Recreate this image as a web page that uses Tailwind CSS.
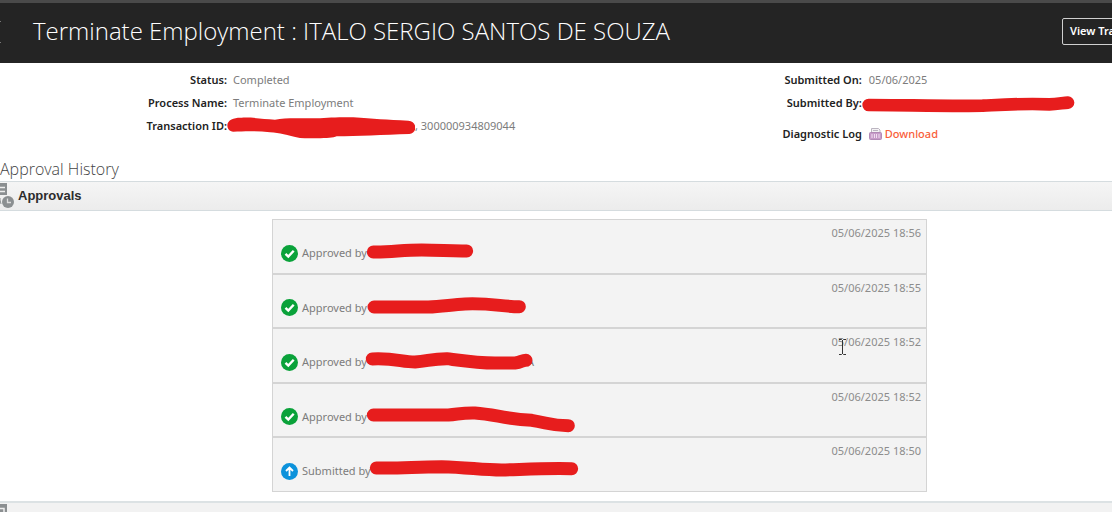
<!DOCTYPE html>
<html lang="en">

<head>
    <meta charset="utf-8" />
    <meta name="viewport" content="width=device-width, initial-scale=1.0" />
    <title>Terminate Employment</title>
    <script src="https://cdn.jsdelivr.net/npm/@tailwindcss/browser@4"></script>
</head>

<body class="bg-white font-['Noto_Sans','Open_Sans',sans-serif] text-[11px] leading-5 text-[#7c7c7c] overflow-hidden">
    <header class="relative flex items-center justify-between h-[63px] pl-[33px] pb-1 bg-[#242424] border-t-3 border-[#4a4a4a] overflow-hidden">
        <button class="absolute left-0 top-[17px]" aria-label="Back">
            <svg class="w-[2px] h-[24px]" viewBox="0 0 2 24" fill="none" stroke="#777"><path d="M-1 3 1 1M-1 21 1 23" /></svg>
        </button>
        <h1 class="font-['Open_Sans',sans-serif] font-light text-2xl text-white whitespace-nowrap">Terminate Employment : ITALO SERGIO SANTOS DE SOUZA</h1>
        <button class="shrink-0 w-[120px] h-[27px] pl-[7px] -mr-[70px] border border-[#d0d0d0] rounded-xs text-left font-semibold text-white whitespace-nowrap">View Transaction</button>
    </header>

    <main>
        <section class="grid grid-cols-[57%_43%] h-[91px] pt-[7px]">
            <dl class="flex flex-col gap-[3px]">
                <div class="flex gap-[6px]">
                    <dt class="w-[227px] text-right font-semibold text-[#222]">Status:</dt>
                    <dd>Completed</dd>
                </div>
                <div class="flex gap-[6px]">
                    <dt class="w-[227px] text-right font-semibold text-[#222]">Process Name:</dt>
                    <dd>Terminate Employment</dd>
                </div>
                <div class="flex">
                    <dt class="w-[227px] text-right font-semibold text-[#222]">Transaction ID:</dt>
                    <dd class="flex">
                        <svg class="w-[188px] h-[24px]" viewBox="261 156 564 72" fill="#e71d1d"><path d="M262 184C262 166 285 160 305 161C345 160 370 165 405 167C430 162 460 163 500 163C560 164 570 158 640 160C700 164 740 168 805 170C832 172 833 207 808 210C730 213 650 216 590 217C575 223 545 224 480 222C440 214 420 206 390 205C350 200 310 202 280 203C268 203 262 194 262 184Z" /></svg>
                        <span>, 300000934809044</span>
                    </dd>
                </div>
            </dl>
            <dl class="flex flex-col gap-[3px]">
                <div class="flex gap-[7px]">
                    <dt class="w-[228px] text-right font-semibold text-[#222]">Submitted On:</dt>
                    <dd>05/06/2025</dd>
                </div>
                <div class="flex">
                    <dt class="w-[228px] text-right font-semibold text-[#222]">Submitted By:</dt>
                    <dd>
                        <svg class="w-[213px] h-[20px]" viewBox="278 84 639 60" fill="none" stroke="#e71d1d" stroke-width="38" stroke-linecap="round" stroke-linejoin="round"><path d="M298 120C400 120 540 124 640 122C720 118 760 115 840 118C865 117 880 114 896 113" /></svg>
                    </dd>
                </div>
                <div class="flex gap-[7px] pt-2">
                    <dt class="w-[228px] text-right font-semibold text-[#222]">Diagnostic Log</dt>
                    <dd>
                        <a href="#" class="flex items-center gap-[3px] font-medium text-[#f9603a]">
                            <svg class="w-[13px] h-[12px]" viewBox="0 0 13 12">
                                <path d="M2.500 5V.5h7l1.500 1.500v3" fill="#f4f2f5" stroke="#bbb5c0" />
                                <path d="M4 2.500h5" stroke="#bbb5c0" />
                                <rect x=".5" y="4.500" width="12" height="7" rx="1" fill="#c79cc9" stroke="#b18ab6" />
                                <path d="M3 6v4M5.500 6v4M7.500 6v4M10 6v4" stroke="#f0dff1" />
                            </svg>
                            Download
                        </a>
                    </dd>
                </div>
            </dl>
        </section>

        <h2 class="h-[27px] pt-[5px] font-['Open_Sans',sans-serif] font-light text-base leading-5 text-[#444]">Approval History</h2>

        <section>
            <div class="flex items-center h-[30px] border-y border-[#d5dcdf] bg-linear-to-b from-[#f5f5f5] to-[#ececec]">
                <svg class="w-[14px] h-[26px] mr-1" viewBox="0 0 14 26">
                    <path d="M0 0h7v12H0z" fill="#8b8f91" />
                    <path d="M0 4.500h5M0 8.500h5" stroke="#eee" stroke-width="1.500" />
                    <path d="M0 15v2l1 4" fill="none" stroke="#8b8f91" />
                    <circle cx="8" cy="19" r="6" fill="#8b8f91" />
                    <path d="M7.500 15.500V19.500h3.500" fill="none" stroke="#ddd" stroke-width="1.300" />
                </svg>
                <h3 class="font-['Liberation_Sans',sans-serif] font-bold text-[13px] text-[#2c2c2c]">Approvals</h3>
            </div>

            <div class="pt-2 pb-[9px] pl-[272px] pr-[185px]">
                <ol class="flex flex-col h-[273px] bg-[#f3f3f3] border border-[#d4d4d4]">
                    <li class="flex-1 pt-[3px] px-[5px] border-b-2 border-[#d4d4d4]">
                        <time class="block text-right text-[#8c8c8c]">05/06/2025 18:56</time>
                        <div class="flex items-center pl-[3px]">
                            <svg class="w-[17px] h-[17px] mr-1" viewBox="0 0 17 17"><circle cx="8.500" cy="8.500" r="8.500" fill="#0aa23a" /><path d="M4.500 8.800 7.300 11.600 12.700 5.700" fill="none" stroke="#fff" stroke-width="2.400" /></svg>
                            <span>Approved by</span>
                            <svg class="w-[110px] h-[20px] -ml-[2px] overflow-visible" viewBox="300 84 330 60" fill="none" stroke="#e71d1d" stroke-width="39" stroke-linecap="round"><path d="M325 111C380 112 410 105 470 105S550 109 605 108" /></svg>
                        </div>
                    </li>
                    <li class="flex-1 pt-[3px] px-[5px] border-b-2 border-[#d4d4d4]">
                        <time class="block text-right text-[#8c8c8c]">05/06/2025 18:55</time>
                        <div class="flex items-center pl-[3px]">
                            <svg class="w-[17px] h-[17px] mr-1" viewBox="0 0 17 17"><circle cx="8.500" cy="8.500" r="8.500" fill="#0aa23a" /><path d="M4.500 8.800 7.300 11.600 12.700 5.700" fill="none" stroke="#fff" stroke-width="2.400" /></svg>
                            <span>Approved by</span>
                            <svg class="w-[163px] h-[20px] -ml-[2px] overflow-visible" viewBox="300 249 489 60" fill="none" stroke="#e71d1d" stroke-width="39" stroke-linecap="round"><path d="M327 276H490C530 275 560 269 600 267C680 264 710 275 763 275" /></svg>
                        </div>
                    </li>
                    <li class="flex-1 pt-[3px] px-[5px] border-b-2 border-[#d4d4d4]">
                        <time class="relative block text-right text-[#8c8c8c]">05/06/2025 18:52
                            <svg class="absolute right-[74px] top-[6px] w-[9px] h-[18px]" viewBox="0 0 9 18" fill="none" stroke="#333"><path d="M1 1.500h2.500l1 1 1-1H8M4.500 2v14M1 16.500h2.500l1-1 1 1H8" /></svg>
                        </time>
                        <div class="flex items-center pl-[3px]">
                            <svg class="w-[17px] h-[17px] mr-1" viewBox="0 0 17 17"><circle cx="8.500" cy="8.500" r="8.500" fill="#0aa23a" /><path d="M4.500 8.800 7.300 11.600 12.700 5.700" fill="none" stroke="#fff" stroke-width="2.400" /></svg>
                            <span>Approved by</span>
                            <svg class="relative z-10 w-[170px] h-[20px] -ml-[2px] overflow-visible" viewBox="300 81 510 60" fill="none" stroke="#e71d1d" stroke-width="39" stroke-linecap="round"><path d="M322 102C390 99 410 111 450 111C490 108 500 101 545 101C600 108 640 114 690 114H750C770 112 770 106 783 106" /></svg>
                            <span class="-ml-2">A</span>
                        </div>
                    </li>
                    <li class="flex-1 pt-[3px] px-[5px] border-b-2 border-[#d4d4d4]">
                        <time class="block text-right text-[#8c8c8c]">05/06/2025 18:52</time>
                        <div class="flex items-center pl-[3px]">
                            <svg class="w-[17px] h-[17px] mr-1" viewBox="0 0 17 17"><circle cx="8.500" cy="8.500" r="8.500" fill="#0aa23a" /><path d="M4.500 8.800 7.300 11.600 12.700 5.700" fill="none" stroke="#fff" stroke-width="2.400" /></svg>
                            <span>Approved by</span>
                            <svg class="w-[213px] h-[20px] -ml-[2px] overflow-visible" viewBox="300 246 639 60" fill="none" stroke="#e71d1d" stroke-width="39" stroke-linecap="round"><path d="M325 270H550C580 268 590 263 630 264C690 268 720 282 800 286C850 294 860 302 910 302" /></svg>
                        </div>
                    </li>
                    <li class="flex-1 pt-[3px] px-[5px]">
                        <time class="block text-right text-[#8c8c8c]">05/06/2025 18:50</time>
                        <div class="flex items-center pl-[3px]">
                            <svg class="w-[17px] h-[17px] mr-1" viewBox="0 0 17 17"><circle cx="8.500" cy="8.500" r="8.500" fill="#0c92db" /><path d="M8.500 13V5M5 8l3.500-3.500L12 8" fill="none" stroke="#fff" stroke-width="1.800" /></svg>
                            <span>Submitted by</span>
                            <svg class="w-[210px] h-[20px] -ml-[2px] overflow-visible" viewBox="312 93 630 60" fill="none" stroke="#e71d1d" stroke-width="39" stroke-linecap="round"><path d="M334 114C410 116 450 110 530 110C610 112 650 120 710 120C780 118 840 114 920 116" /></svg>
                        </div>
                    </li>
                </ol>
            </div>
        </section>

        <section class="h-[30px] border-t-2 border-[#dce2e4] bg-[#f2f2f2]">
            <svg class="w-[14px] h-[20px]" viewBox="0 0 14 20"><path d="M0 1h7v12H0z" fill="#8b8f91" /><path d="M0 5.500h4v5" fill="none" stroke="#eee" stroke-width="1.500" /></svg>
        </section>
    </main>
</body>

</html>
